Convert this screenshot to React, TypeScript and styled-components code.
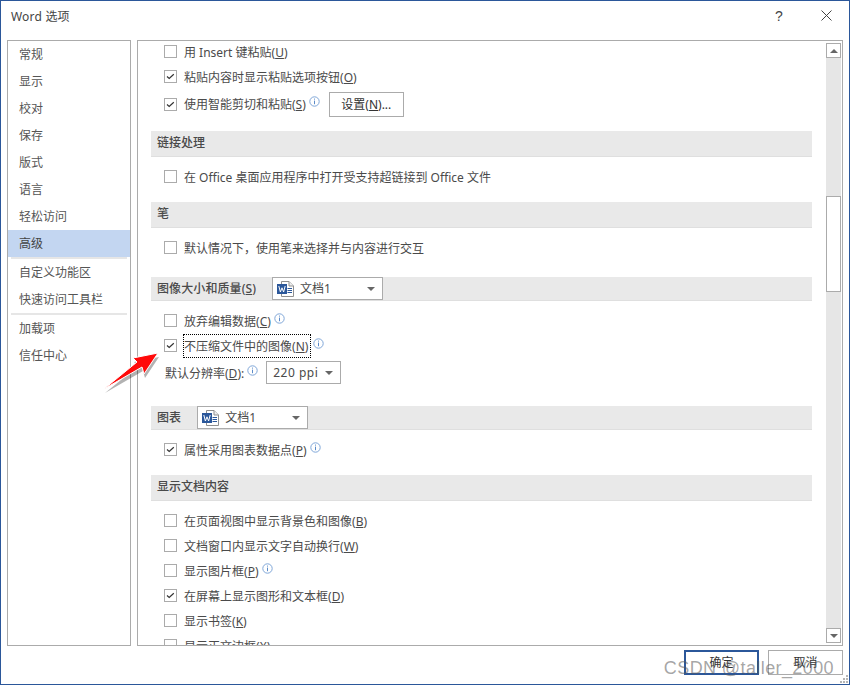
import React from 'react';
import styled, { createGlobalStyle } from 'styled-components';

const GlobalStyle = createGlobalStyle`
  html, body { margin: 0; padding: 0; background: #fff; }
  body { font-family: "Noto Sans", "Noto Sans CJK SC", sans-serif; }
`;

const navGroups = [
  ['常规', '显示', '校对', '保存', '版式', '语言', '轻松访问', '高级'],
  ['自定义功能区', '快速访问工具栏'],
  ['加载项', '信任中心'],
];

const InfoIcon = () => (
  <Info viewBox="0 0 11 11">
    <circle cx="5.5" cy="5.5" r="4.7" fill="none" stroke="#7fa6d8" strokeWidth="1" />
    <rect x="5" y="2.6" width="1" height="1" fill="#5b8bc8" />
    <rect x="5" y="4.6" width="1" height="3.6" fill="#5b8bc8" />
  </Info>
);

const Check = ({ checked }: { checked?: boolean }) => (
  <CheckBox>
    {checked && (
      <svg width="11" height="11" viewBox="0 0 11 11">
        <path d="M2 5.500 L4.200 7.500 L8.800 3.200" fill="none" stroke="#333" strokeWidth="1.2" />
      </svg>
    )}
  </CheckBox>
);

const DocIcon = () => (
  <svg width="17" height="16" viewBox="0 0 17 16">
    <path d="M4.500 .5 H12 L16.500 5 V15.500 H4.500 Z" fill="#fff" stroke="#8f8f8f" />
    <path d="M12 .5 V5 H16.500" fill="#eee" stroke="#8f8f8f" />
    <path d="M10.500 7.500h4.500M10.500 9.500h4.500M10.500 11.500h4.500" stroke="#2b579a" strokeWidth="1" />
    <rect x="0" y="3" width="10" height="10" fill="#2b579a" />
    <path d="M1.800 5 L3.400 11 L5 6.800 L6.600 11 L8.200 5" fill="none" stroke="#fff" strokeWidth="1" />
  </svg>
);

const Select = ({ width, label, icon }: { width: number; label: string; icon?: boolean }) => (
  <SelectBox $width={width} $icon={icon}>
    {icon && <DocIcon />}
    <SelectLabel $spaced={!icon}>{label}</SelectLabel>
    <Caret />
  </SelectBox>
);

type RowProps = {
  checked?: boolean;
  text: string;
  hotkey?: string;
  info?: boolean;
  focused?: boolean;
};

const OptionRow = ({ checked, text, hotkey, info, focused }: RowProps) => (
  <Row>
    <Check checked={checked} />
    <RowLabel $focused={focused}>
      {text}
      {hotkey && (
        <>
          (<u>{hotkey}</u>)
        </>
      )}
    </RowLabel>
    {info && <InfoIcon />}
  </Row>
);

export default function App() {
  return (
    <Dialog>
      <GlobalStyle />
      <TitleBar>
        <Title>Word 选项</Title>
        <HelpButton>?</HelpButton>
        <CloseButton viewBox="0 0 11 11">
          <path d="M.5 .5 L10.500 10.500 M10.500 .5 L.5 10.500" stroke="#444" strokeWidth="1" />
        </CloseButton>
      </TitleBar>

      <Main>
        <Sidebar>
          {navGroups.map((group, i) => (
            <React.Fragment key={i}>
              {i > 0 && <NavSeparator />}
              {group.map((item) => (
                <NavItem key={item} $active={item === '高级'}>
                  {item}
                </NavItem>
              ))}
            </React.Fragment>
          ))}
        </Sidebar>

        <Panel>
          <Content>
            <Rows $top={0}>
              <OptionRow text="用 Insert 键粘贴" hotkey="U" />
              <OptionRow checked text="粘贴内容时显示粘贴选项按钮" hotkey="O" />
              <TallRow>
                <Check checked />
                <RowLabel>
                  使用智能剪切和粘贴(<u>S</u>)
                </RowLabel>
                <InfoIcon />
                <SettingsButton>
                  设置(<u>N</u>)...
                </SettingsButton>
              </TallRow>
            </Rows>

            <SectionHeader $top={12}>链接处理</SectionHeader>
            <Rows>
              <OptionRow text="在 Office 桌面应用程序中打开受支持超链接到 Office 文件" />
            </Rows>

            <SectionHeader $top={13}>笔</SectionHeader>
            <Rows>
              <OptionRow text="默认情况下，使用笔来选择并与内容进行交互" />
            </Rows>

            <ToolHeader $top={17}>
              <HeaderLabel>
                图像大小和质量(<u>S</u>)
              </HeaderLabel>
              <Select width={111} label="文档1" icon />
            </ToolHeader>
            <Rows>
              <OptionRow text="放弃编辑数据" hotkey="C" info />
              <OptionRow checked text="不压缩文件中的图像" hotkey="N" info focused />
              <ResolutionRow>
                <span>
                  默认分辨率(<u>D</u>):
                </span>
                <InfoIcon />
                <ResolutionSelect>
                  <Select width={75} label="220 ppi" />
                </ResolutionSelect>
              </ResolutionRow>
            </Rows>

            <ToolHeader $top={19}>
              <HeaderLabel>图表</HeaderLabel>
              <Select width={111} label="文档1" icon />
            </ToolHeader>
            <Rows>
              <OptionRow checked text="属性采用图表数据点" hotkey="P" info />
            </Rows>

            <SectionHeader $top={13}>显示文档内容</SectionHeader>
            <Rows>
              <OptionRow text="在页面视图中显示背景色和图像" hotkey="B" />
              <OptionRow text="文档窗口内显示文字自动换行" hotkey="W" />
              <OptionRow text="显示图片框" hotkey="P" info />
              <OptionRow checked text="在屏幕上显示图形和文本框" hotkey="D" />
              <OptionRow text="显示书签" hotkey="K" />
              <OptionRow text="显示正文边框" hotkey="X" />
            </Rows>
          </Content>

          <ScrollBar>
            <ScrollButton>
              <Arrow $up />
            </ScrollButton>
            <ScrollThumb />
            <ScrollButton>
              <Arrow />
            </ScrollButton>
          </ScrollBar>
        </Panel>
      </Main>

      <Footer>
        <FooterButton $primary>确定</FooterButton>
        <FooterButton>取消</FooterButton>
      </Footer>

      <RedArrow width="64" height="50" viewBox="0 0 64 50">
        <path d="M58 7 L33 12 L37 16 L4 43 L42 21 L44 28 Z" fill="#000" opacity=".3" transform="translate(1 2)" />
        <path d="M58 5 L33 10 L37 14 L4 41 L42 19 L44 26 Z" fill="#ff0a0a" stroke="#fff" strokeWidth="1" strokeLinejoin="round" />
      </RedArrow>

      <Watermark>CSDN @taller_2000</Watermark>
      <Grip viewBox="0 0 10 10">
        <path d="M7 1h2v2H7zM4 4h2v2H4zM7 4h2v2H7zM1 7h2v2H1zM4 7h2v2H4zM7 7h2v2H7z" fill="#b5b5b5" />
      </Grip>
    </Dialog>
  );
}

const Dialog = styled.div`
  position: relative;
  box-sizing: border-box;
  width: 850px;
  height: 685px;
  display: flex;
  flex-direction: column;
  overflow: hidden;
  background: #fff;
  border: 1px solid #2b579a;
  color: #4a4a4a;
  font-size: 12px;
`;

const TitleBar = styled.div`
  display: flex;
  align-items: center;
  height: 39px;
  padding: 0 17px 10px 10px;
  box-sizing: border-box;
`;

const Title = styled.div`
  flex: 1;
  font-size: 12px;
  color: #444;
  letter-spacing: 0.2px;
`;

const HelpButton = styled.div`
  width: 10px;
  margin-right: 36px;
  font-family: 'Liberation Sans', sans-serif;
  font-size: 14px;
  color: #444;
`;

const CloseButton = styled.svg`
  width: 11px;
  height: 11px;
`;

const Main = styled.div`
  display: flex;
  gap: 6px;
  height: 606px;
  padding: 0 6px;
`;

const Sidebar = styled.div`
  box-sizing: border-box;
  flex: none;
  width: 124px;
  height: 606px;
  border: 1px solid #ababab;
`;

const NavSeparator = styled.div`
  height: 2px;
  margin: 0 3px;
  background: #e6e6e6;
`;

const NavItem = styled.div<{ $active?: boolean }>`
  height: 27px;
  line-height: 28px;
  padding-left: 11px;
  color: ${(p) => (p.$active ? '#444' : '#555')};
  background: ${(p) => (p.$active ? '#c3d6f1' : 'transparent')};
`;

const Panel = styled.div`
  box-sizing: border-box;
  flex: 1;
  height: 606px;
  display: flex;
  border: 1px solid #ababab;
  overflow: hidden;
`;

const Content = styled.div`
  flex: 1;
  margin-top: -2px;
  padding: 0 14px 0 13px;
  overflow: hidden;
`;

const Rows = styled.div<{ $top?: number }>`
  padding-top: ${(p) => p.$top ?? 7}px;
  padding-left: 13px;
`;

const Row = styled.div`
  display: flex;
  align-items: center;
  height: 25px;
  white-space: nowrap;
`;

const TallRow = styled(Row)`
  height: 30px;
`;

const ResolutionRow = styled(Row)`
  height: 29px;
  padding-left: 1px;
`;

const ResolutionSelect = styled.div`
  margin-left: 8px;
`;

const CheckBox = styled.div`
  box-sizing: border-box;
  flex: none;
  width: 13px;
  height: 13px;
  margin-right: 7px;
  display: flex;
  align-items: center;
  justify-content: center;
  background: #fff;
  border: 1px solid #ababab;
`;

const RowLabel = styled.span<{ $focused?: boolean }>`
  padding: ${(p) => (p.$focused ? '2px 2px 2px 0' : '0')};
  outline: ${(p) => (p.$focused ? '1px dotted #000' : 'none')};
`;

const Info = styled.svg`
  flex: none;
  width: 11px;
  height: 11px;
  margin: -5px 0 0 3px;
`;

const SettingsButton = styled.div`
  box-sizing: border-box;
  width: 75px;
  height: 25px;
  margin-left: 9px;
  line-height: 23px;
  text-align: center;
  color: #333;
  background: #fff;
  border: 1px solid #ababab;
`;

const SectionHeader = styled.div<{ $top: number }>`
  box-sizing: border-box;
  height: 26px;
  margin-top: ${(p) => p.$top}px;
  padding-left: 6px;
  line-height: 24px;
  font-weight: 500;
  color: #4a4a4a;
  background: #e9e9e9;
  border-bottom: 1px solid #dfdfdf;
`;

const ToolHeader = styled(SectionHeader)`
  display: flex;
  align-items: center;
  height: 24px;
  gap: 16px;
`;

const HeaderLabel = styled.span`
  white-space: nowrap;
  letter-spacing: 0.1px;
`;

const SelectBox = styled.div<{ $width: number; $icon?: boolean }>`
  box-sizing: border-box;
  flex: none;
  display: flex;
  align-items: center;
  gap: 6px;
  width: ${(p) => p.$width}px;
  height: 23px;
  padding: 0 7px 0 ${(p) => (p.$icon ? '4px' : '6px')};
  font-weight: 400;
  background: #fff;
  border: 1px solid #ababab;
`;

const SelectLabel = styled.span<{ $spaced?: boolean }>`
  flex: 1;
  letter-spacing: ${(p) => (p.$spaced ? '0.5px' : '0')};
`;

const Caret = styled.div`
  width: 0;
  height: 0;
  border-left: 4px solid transparent;
  border-right: 4px solid transparent;
  border-top: 4px solid #666;
`;

const ScrollBar = styled.div`
  flex: none;
  width: 15px;
  margin: 2px 1px 2px 0;
  display: flex;
  flex-direction: column;
  background: #e6e6e6;
`;

const ScrollButton = styled.div`
  box-sizing: border-box;
  flex: none;
  width: 15px;
  height: 15px;
  display: flex;
  align-items: center;
  justify-content: center;
  background: #fff;
  border: 1px solid #ababab;
`;

const Arrow = styled.div<{ $up?: boolean }>`
  width: 0;
  height: 0;
  border-left: 4px solid transparent;
  border-right: 4px solid transparent;
  border-${(p) => (p.$up ? 'bottom' : 'top')}: 4px solid #666;
`;

const ScrollThumb = styled.div`
  box-sizing: border-box;
  flex: none;
  width: 15px;
  height: 96px;
  margin: 138px 0 336px;
  background: #fff;
  border: 1px solid #ababab;
`;

const Footer = styled.div`
  display: flex;
  justify-content: flex-end;
  gap: 9px;
  padding: 4px 6px 0 0;
`;

const FooterButton = styled.div<{ $primary?: boolean }>`
  box-sizing: border-box;
  width: 75px;
  height: 25px;
  line-height: ${(p) => (p.$primary ? '21px' : '23px')};
  text-align: center;
  color: #333;
  background: #fff;
  border: ${(p) => (p.$primary ? '2px solid #2b579a' : '1px solid #ababab')};
`;

const RedArrow = styled.svg`
  position: absolute;
  left: 99px;
  top: 347px;
`;

const Watermark = styled.div`
  position: absolute;
  right: 15px;
  bottom: 5px;
  font-family: 'Liberation Sans', sans-serif;
  font-size: 18px;
  letter-spacing: 0.4px;
  color: rgba(90, 90, 90, 0.55);
  white-space: nowrap;
  pointer-events: none;
`;

const Grip = styled.svg`
  position: absolute;
  right: 0;
  bottom: 0;
  width: 10px;
  height: 10px;
`;
